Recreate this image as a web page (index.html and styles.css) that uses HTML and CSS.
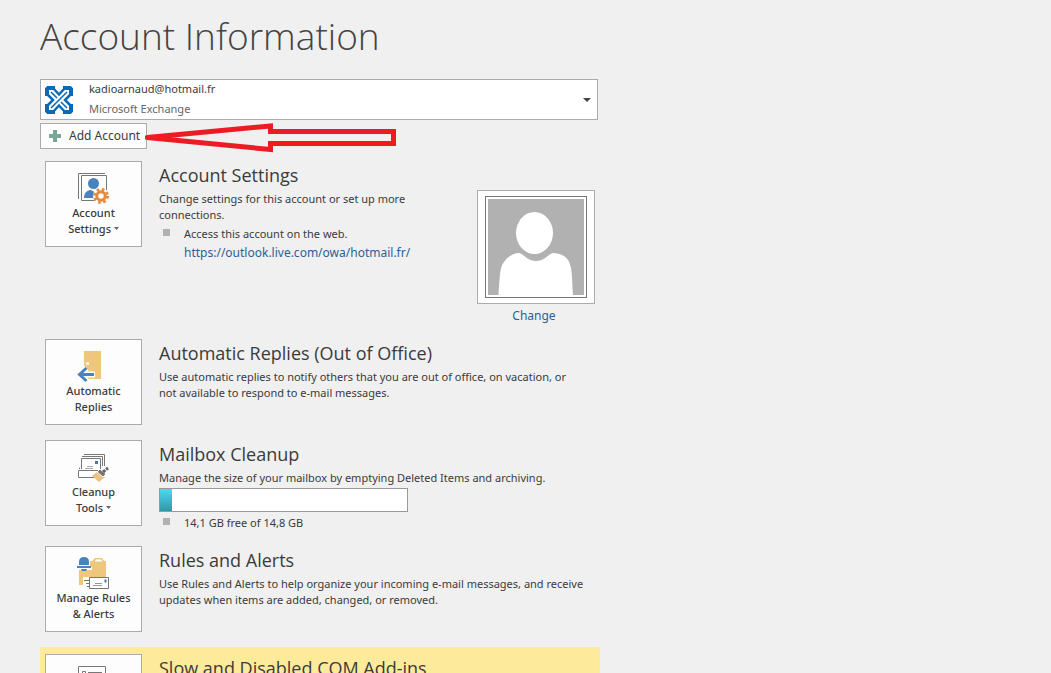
FILE: index.html
```html
<!DOCTYPE html>
<html lang="en">
<head>
<meta charset="utf-8">
<title>Account Information</title>
<link rel="stylesheet" href="styles.css">
</head>
<body>
<main class="page">
  <h1 class="title">Account Information</h1>

  <button class="account" type="button">
    <svg class="account-logo" width="30" height="30" viewBox="0 0 30 30" fill="none" stroke="#0a6ab6">
      <path d="M11 3H4L3 4V11M19 3H26L27 4V11M27 19V26L26 27H19M11 27H4L3 26V19" stroke-width="4"/>
      <path d="M9 3L15 9.500L21 3M27 9L21 15L27 21M21 27L15 20.500L9 27M3 21L9 15L3 9" stroke-width="2.500"/>
      <path d="M7 7L13 13M17 17L23 23M23 7L7 23" stroke-width="1.500"/>
    </svg>
    <span class="account-text">
      <span class="account-mail">kadioarnaud@hotmail.fr</span>
      <span class="account-type">Microsoft Exchange</span>
    </span>
    <svg class="account-caret" width="8" height="4" viewBox="0 0 8 4"><path d="M0 0H8L4 4Z" fill="#444"/></svg>
  </button>

  <div class="add-row">
    <button class="add" type="button">
      <svg width="12" height="12" viewBox="0 0 12 12"><path d="M4 0H8V4H12V8H8V12H4V8H0V4H4Z" fill="#76a797"/></svg>
      Add Account
    </button>
    <svg class="arrow" width="256" height="32" viewBox="0 0 256 32" fill="none" stroke="#ed1c24" stroke-width="5"><path d="M2 15.500L125.500 4V9.500H248.500V21.500H125.500V27.500Z" stroke-linejoin="miter" stroke-miterlimit="2"/><path d="M0 15.500H12" stroke-width="4"/></svg>
  </div>

  <section class="row row-settings">
    <button class="tile" type="button">
      <svg class="tile-icon" width="34" height="32" viewBox="0 0 34 32">
        <path d="M1.500 27V1.500H28" fill="none" stroke="#777"/>
        <path d="M4.500 3.500H29.500V28.500H4.500Z" fill="#fff" stroke="#777"/>
        <circle cx="16.500" cy="11.500" r="5.500" fill="#4a82bd"/>
        <path d="M7 26C7 20 11 18 14 18L19 21L18 26Z" fill="#4a82bd"/>
        <circle cx="24" cy="24" r="8" fill="#fff"/>
        <circle cx="24" cy="24" r="4.200" fill="none" stroke="#e68a3e" stroke-width="3"/>
        <circle cx="24" cy="24" r="6.500" fill="none" stroke="#e68a3e" stroke-width="3" stroke-dasharray="2.600 2.505"/>
      </svg>
      <span>Account<br>Settings <svg class="mini" width="5" height="3" viewBox="0 0 5 3"><path d="M0 0H5L2.500 3Z" fill="#666"/></svg></span>
    </button>
    <div class="info">
      <h2>Account Settings</h2>
      <p>Change settings for this account or set up more<br>connections.</p>
      <ul class="notes">
        <li>Access this account on the web.<a class="web-link" href="https://outlook.live.com/owa/hotmail.fr/">https://outlook.live.com/owa/hotmail.fr/</a></li>
      </ul>
    </div>
    <div class="photo">
      <div class="photo-frame">
        <svg class="photo-image" width="96" height="96" viewBox="0 0 96 96">
          <path d="M0 0H96V96H0Z" fill="#b1b1b1"/>
          <ellipse cx="46.500" cy="34" rx="18.500" ry="21" fill="#fff"/>
          <path d="M10.500 96C12 75 12 68 16 63C20 57 26 54 31 54C36 55 39 62 48 62C57 62 60 55 65 54C70 54 77 56 80 61C84 67 84 76 85 96Z" fill="#fff"/>
        </svg>
      </div>
      <a class="photo-link" href="#change">Change</a>
    </div>
  </section>

  <section class="row row-replies">
    <button class="tile" type="button">
      <svg class="tile-icon" width="34" height="32" viewBox="0 0 34 32">
        <path d="M7 1H24V29H7Z" fill="#eec77d"/>
        <circle cx="10.500" cy="13.500" r="1.600" fill="#fff"/>
        <path d="M18 24.500H4M9.500 18L2.500 24.500L9.500 31" fill="none" stroke="#fff" stroke-width="6"/>
        <path d="M17 24.500H3M9.500 18L2.500 24.500L9.500 31" fill="none" stroke="#4a82bd" stroke-width="3"/>
      </svg>
      <span>Automatic<br>Replies</span>
    </button>
    <div class="info">
      <h2>Automatic Replies (Out of Office)</h2>
      <p>Use automatic replies to notify others that you are out of office, on vacation, or<br>not available to respond to e-mail messages.</p>
    </div>
  </section>

  <section class="row row-cleanup">
    <button class="tile" type="button">
      <svg class="tile-icon" width="34" height="32" viewBox="0 0 34 32">
        <path d="M7 3.500H27.500V15M5 5.500H25.500V15" fill="none" stroke="#777"/>
        <path d="M4.500 18V7.500H23.500V19M2.500 16.500V18" fill="#fff" stroke="#777"/>
        <path d="M18 10H21V13H18Z" fill="#3f78b5"/>
        <path d="M10 15.500H16M8 17.500H16" stroke="#aaa"/>
        <path d="M1.500 19.500H24V26.500H1.500Z" fill="#fff" stroke="#777"/>
        <path d="M15 25L21 20L28 26L22 31Z" fill="#eec281"/>
        <path d="M20 21L23 18L29 23L26 26Z" fill="#777" stroke="#fff"/>
        <path d="M26 21L31 17" stroke="#666" stroke-width="3" stroke-dasharray="3 1"/>
      </svg>
      <span>Cleanup<br>Tools <svg class="mini" width="5" height="3" viewBox="0 0 5 3"><path d="M0 0H5L2.500 3Z" fill="#666"/></svg></span>
    </button>
    <div class="info">
      <h2>Mailbox Cleanup</h2>
      <p>Manage the size of your mailbox by emptying Deleted Items and archiving.</p>
      <div class="meter"><div class="meter-fill" style="width:5%"></div></div>
      <ul class="notes">
        <li>14,1 GB free of 14,8 GB</li>
      </ul>
    </div>
  </section>

  <section class="row row-rules">
    <button class="tile" type="button">
      <svg class="tile-icon" width="34" height="32" viewBox="0 0 34 32">
        <path d="M2 10V28H29V4H27L25 1H18L15 4H13V10Z" fill="#eec77d"/>
        <path d="M18 4.500L19 2.500H24L25.500 4.500Z" fill="#fff"/>
        <path d="M0 13V10H2L4 8V4Q4 2 6 1V-1H9V1Q11 2 11 4V8L13 10H15V13Z" fill="#fff"/>
        <path d="M0 9H14V11H0ZM2 8V5Q2 0 7 0Q12 0 12 5V8ZM4 12H10L9 14H5Z" fill="#4a82bd"/>
        <path d="M6 20H31V31H6Z" fill="#fff"/>
        <path d="M12.500 20.500H31.500V31.500H12.500ZM7 23.500H12M9 26.500H12M10 29.500H12" fill="none" stroke="#777"/>
        <path d="M27.500 22.500H29.500V25.500H27.500Z" fill="#3f78b5"/>
        <path d="M18 26.500H25M16 28.500H25" stroke="#999"/>
      </svg>
      <span>Manage Rules<br>&amp; Alerts</span>
    </button>
    <div class="info">
      <h2>Rules and Alerts</h2>
      <p>Use Rules and Alerts to help organize your incoming e-mail messages, and receive<br>updates when items are added, changed, or removed.</p>
    </div>
  </section>

  <section class="row row-addins">
    <button class="tile" type="button" aria-label="Manage COM Add-ins">
      <svg class="tile-icon" width="34" height="32" viewBox="0 0 34 32" fill="none" stroke="#777">
        <path d="M1.500 1.500H28.500V28.500H1.500ZM5.500 6.500H8.500V9.500H5.500ZM11 7.500H25M5.500 14.500H8.500V17.500H5.500ZM11 16.500H25"/>
      </svg>
    </button>
    <div class="info">
      <h2>Slow and Disabled COM Add-ins</h2>
    </div>
  </section>
</main>
</body>
</html>
```
FILE: styles.css
```css
* { box-sizing: border-box; }
body {
  margin: 0;
  height: 100vh;
  overflow: hidden;
  background: #f0f0f0;
  color: #3b3b3b;
  font: 11px/16px "Noto Sans", "Open Sans", sans-serif;
}
h1, h2, p, ul { margin: 0; padding: 0; font-weight: 400; }
button { font: inherit; color: inherit; border: 1px solid #ababab; background: #fdfdfd; border-radius: 0; }
svg { display: block; flex: none; }
a { color: #2a6099; text-decoration: none; }

.page { max-width: 600px; padding-left: 40px; }
.title {
  padding-top: 10px;
  height: 79px;
  font: 300 37px/52px "Open Sans", "Noto Sans", sans-serif;
  color: #444;
  white-space: nowrap;
}
.account {
  display: flex;
  align-items: center;
  width: calc(100% - 2px);
  min-height: 41px;
  padding: 0 6px 0 3px;
  background: #fff;
  text-align: left;
}
.account-text { flex: 1; padding-left: 15px; }
.account-text span { display: block; }
.account-mail { line-height: 18px; }
.account-type { color: #666; line-height: 21px; }

.add-row { position: relative; padding-top: 3px; }
.add { display: flex; align-items: center; gap: 8px; height: 26px; padding: 0 6px 0 8px; font-size: 12px; }
.arrow { position: absolute; left: 105px; top: 2px; }

.row { display: flex; gap: 17px; padding-left: 5px; }
.row-settings { margin-top: 12px; min-height: 178px; }
.row-replies, .row-rules { min-height: 101px; }
.row-cleanup { min-height: 106px; }
.row-addins { padding-top: 7px; background: #fdeb9b; min-height: 100px; }
.tile {
  display: flex;
  flex-direction: column;
  align-items: center;
  flex: none;
  width: 97px;
  height: 86px;
  padding: 10px 0 0;
  font-weight: 500;
  white-space: nowrap;
}
.tile-icon { margin-bottom: 1px; overflow: visible; }
.mini { display: inline-block; vertical-align: 3px; }
.info { flex: 1; white-space: nowrap; }
.info h2 { font: 400 18px/24px "Open Sans", "Noto Sans", sans-serif; padding: 2px 0 4px; }
.notes { list-style: none; padding-left: 25px; }
.notes li { position: relative; padding-top: 3px; }
.notes li::before { content: ""; position: absolute; left: -21px; top: 6px; width: 7px; height: 7px; background: #b1b1b1; }
.web-link { display: block; padding-top: 3px; font-size: 12px; }
.photo { padding-top: 29px; margin-right: 5px; text-align: center; }
.photo-frame { padding: 5px 7px; margin-bottom: 4px; border: 1px solid #ababab; background: #fff; }
.photo-image { box-sizing: content-box; padding: 2px; border: 1px solid #777; }
.photo-link { padding-right: 4px; font-size: 12px; }
.meter { width: 249px; height: 24px; margin-top: 2px; border: 1px solid #999; background: #fff; }
.meter-fill { height: 100%; background: linear-gradient(#50d8ee, #2f97aa); }
```
